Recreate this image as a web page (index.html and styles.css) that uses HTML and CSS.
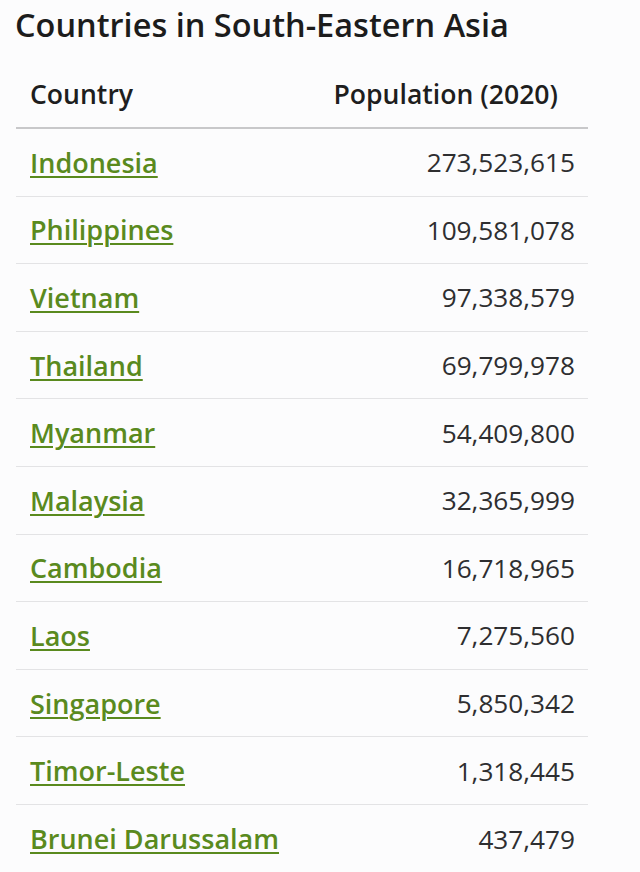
FILE: index.html
```html
<!DOCTYPE html>
<html lang="en">
<head>
<meta charset="utf-8">
<title>Countries in South-Eastern Asia</title>
<link rel="stylesheet" href="styles.css">
</head>
<body>
<main class="page">
  <h1 class="title">Countries in South-Eastern Asia</h1>
  <div class="table">
    <div class="row head">
      <span class="cell">Country</span>
      <span class="cell num">Population (2020)</span>
    </div>
    <div class="row"><a class="cell link" href="#">Indonesia</a><span class="cell num">273,523,615</span></div>
    <div class="row"><a class="cell link" href="#">Philippines</a><span class="cell num">109,581,078</span></div>
    <div class="row"><a class="cell link" href="#">Vietnam</a><span class="cell num">97,338,579</span></div>
    <div class="row"><a class="cell link" href="#">Thailand</a><span class="cell num">69,799,978</span></div>
    <div class="row"><a class="cell link" href="#">Myanmar</a><span class="cell num">54,409,800</span></div>
    <div class="row"><a class="cell link" href="#">Malaysia</a><span class="cell num">32,365,999</span></div>
    <div class="row"><a class="cell link" href="#">Cambodia</a><span class="cell num">16,718,965</span></div>
    <div class="row"><a class="cell link" href="#">Laos</a><span class="cell num">7,275,560</span></div>
    <div class="row"><a class="cell link" href="#">Singapore</a><span class="cell num">5,850,342</span></div>
    <div class="row"><a class="cell link" href="#">Timor-Leste</a><span class="cell num">1,318,445</span></div>
    <div class="row last"><a class="cell link" href="#">Brunei Darussalam</a><span class="cell num">437,479</span></div>
  </div>
</main>
</body>
</html>
```
FILE: styles.css
```css
html, body {
  margin: 0;
  padding: 0;
  background: #fcfcfd;
}
body {
  font-family: "Open Sans", "Liberation Sans", sans-serif;
  color: #2a2a2a;
}
.page {
  padding: 5px 52px 0 15px;
}
.title {
  margin: 0 0 16px;
  font-size: 32.5px;
  line-height: 40px;
  font-weight: 600;
  color: #1c1c1c;
}
.table {
  display: flex;
  flex-direction: column;
  margin-left: 1px;
}
.row {
  display: flex;
  justify-content: space-between;
  align-items: center;
  height: 67.6px;
  box-sizing: border-box;
  padding: 0 13px 0 14px;
  border-bottom: 1px solid #e3e3e5;
}
.row.last {
  border-bottom: none;
}
.row.head {
  height: 68px;
  border-bottom: 2px solid #c8c8ca;
  font-weight: 600;
  color: #1e1e1e;
  padding-right: 30px;
}
.cell {
  font-size: 27px;
}
.head .cell {
  font-size: 26.6px;
  color: #1e1e1e;
}
.num {
  text-align: right;
  font-size: 26.2px;
  color: #2e2e30;
}
.link {
  color: #5a8a1e;
  font-weight: 600;
  text-decoration: underline;
  text-decoration-thickness: 2px;
  text-underline-offset: 3px;
}
```
